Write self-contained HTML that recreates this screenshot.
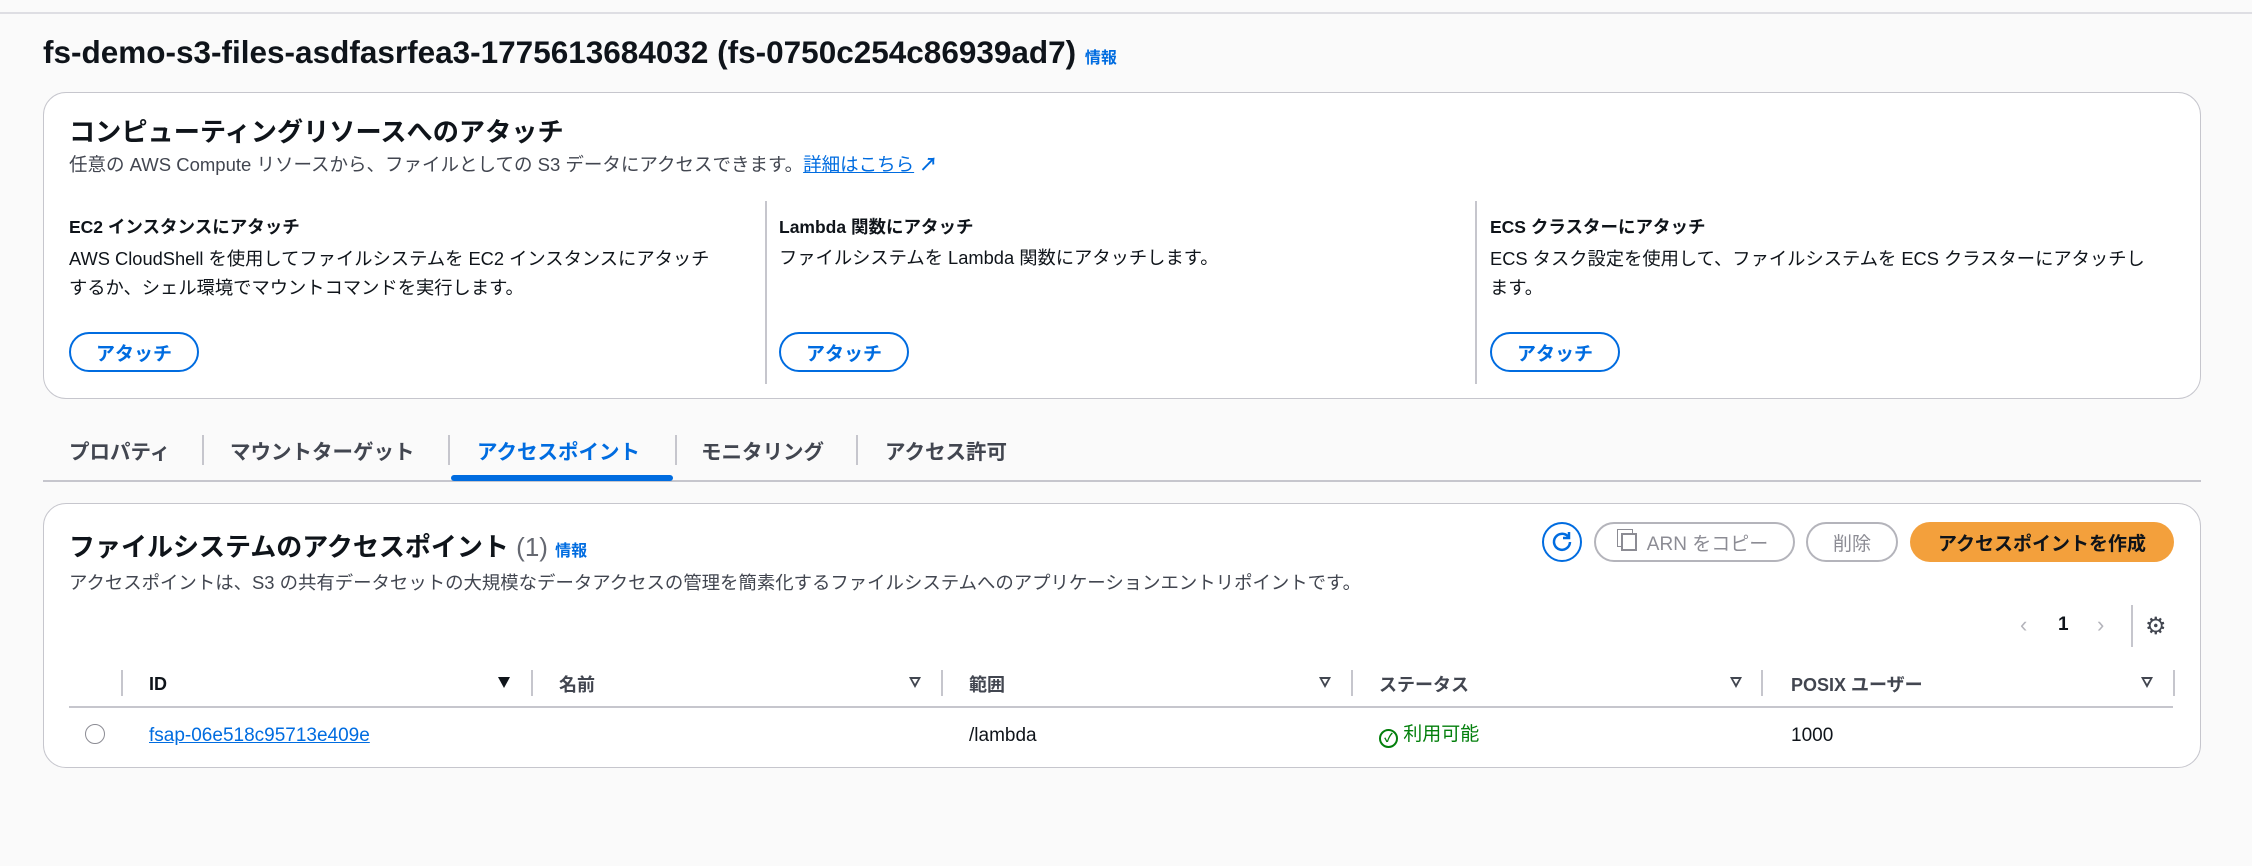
<!DOCTYPE html>
<html><head><meta charset="utf-8"><style>
*{box-sizing:border-box;margin:0;padding:0}
body{width:2252px;height:866px;background:#fafafa;font-family:"Liberation Sans","Noto Sans CJK JP",sans-serif;color:#0f141a;position:relative;overflow:hidden;font-size:19px}
.a{position:absolute;white-space:nowrap}
.card{position:absolute;background:#fff;border:1.5px solid #c6c6cd;border-radius:23px}
.b{font-weight:700}
.link{color:#006ce0}
.btn{position:absolute;height:40px;border:2px solid #006ce0;border-radius:20px;color:#006ce0;font-weight:700;display:flex;align-items:center;justify-content:center;font-size:19px;background:#fff}
.vd{position:absolute;width:1.5px;background:#c6c6cd}
.gray{color:#424650}
.tri{position:absolute;width:0;height:0;border-left:6px solid transparent;border-right:6px solid transparent;border-top:11px solid #424650}
.tri.o::after{content:"";position:absolute;left:-3px;top:-9px;border-left:3px solid transparent;border-right:3px solid transparent;border-top:5px solid #fff}
</style></head><body>
<div class="a" style="left:0;top:12px;width:2252px;height:2px;background:#dedee3"></div>
<div class="a b" style="left:43px;top:34px;font-size:31.5px">fs-demo-s3-files-asdfasrfea3-1775613684032 (fs-0750c254c86939ad7) <span class="link" style="font-size:16px">情報</span></div>

<div class="card" style="left:43px;top:92px;width:2158px;height:307px"></div>
<div class="a b" style="left:69px;top:111px;font-size:26.2px">コンピューティングリソースへのアタッチ</div>
<div class="a gray" style="left:69px;top:151px;font-size:18.5px">任意の AWS Compute リソースから、ファイルとしての S3 データにアクセスできます。<span class="link" style="text-decoration:underline">詳細はこちら</span> <span class="link b">↗</span></div>
<div class="vd" style="left:765px;top:201px;height:183px"></div>
<div class="vd" style="left:1475px;top:201px;height:183px"></div>
<div class="a b" style="left:69px;top:214px;font-size:17.5px">EC2 インスタンスにアタッチ</div>
<div class="a" style="left:69px;top:244px;font-size:18.3px;line-height:29px">AWS CloudShell を使用してファイルシステムを EC2 インスタンスにアタッチ<br>するか、シェル環境でマウントコマンドを実行します。</div>
<div class="btn" style="left:69px;top:332px;width:130px">アタッチ</div>
<div class="a b" style="left:779px;top:214px;font-size:17.5px">Lambda 関数にアタッチ</div>
<div class="a" style="left:779px;top:244px;font-size:18.3px">ファイルシステムを Lambda 関数にアタッチします。</div>
<div class="btn" style="left:779px;top:332px;width:130px">アタッチ</div>
<div class="a b" style="left:1490px;top:214px;font-size:17.5px">ECS クラスターにアタッチ</div>
<div class="a" style="left:1490px;top:244px;font-size:18.3px;line-height:29px">ECS タスク設定を使用して、ファイルシステムを ECS クラスターにアタッチし<br>ます。</div>
<div class="btn" style="left:1490px;top:332px;width:130px">アタッチ</div>

<div class="a b gray" style="left:69px;top:435px;font-size:20.5px">プロパティ</div>
<div class="a b gray" style="left:230px;top:435px;font-size:20.5px">マウントターゲット</div>
<div class="a b link" style="left:477px;top:435px;font-size:20.5px">アクセスポイント</div>
<div class="a b gray" style="left:701px;top:435px;font-size:20.5px">モニタリング</div>
<div class="a b gray" style="left:885px;top:435px;font-size:20.5px">アクセス許可</div>
<div class="vd" style="left:202px;top:435px;height:30px"></div>
<div class="vd" style="left:448px;top:435px;height:30px"></div>
<div class="vd" style="left:675px;top:435px;height:30px"></div>
<div class="vd" style="left:856px;top:435px;height:30px"></div>
<div class="a" style="left:43px;top:480px;width:2158px;height:2px;background:#c6c6cd"></div>
<div class="a" style="left:451px;top:475px;width:222px;height:6px;border-radius:3px;background:#006ce0"></div>

<div class="card" style="left:43px;top:503px;width:2158px;height:265px"></div>
<div class="a b" style="left:69px;top:527px;font-size:26px">ファイルシステムのアクセスポイント <span style="font-weight:400;color:#656871">(1)</span> <span class="link" style="font-size:16px">情報</span></div>
<div class="a gray" style="left:69px;top:569px;font-size:18.4px">アクセスポイントは、S3 の共有データセットの大規模なデータアクセスの管理を簡素化するファイルシステムへのアプリケーションエントリポイントです。</div>

<div class="a" style="left:1542px;top:522px;width:40px;height:40px;border:2px solid #006ce0;border-radius:50%;background:#fff"><svg width="36" height="36" viewBox="0 0 36 36" style="position:absolute;left:0;top:0"><path d="M24 12.5A8 8 0 1 0 26 18" fill="none" stroke="#006ce0" stroke-width="2.5"/><path d="M25 8v6h-6" fill="none" stroke="#006ce0" stroke-width="2.5"/></svg></div>
<div class="btn" style="left:1594px;top:522px;width:201px;border-color:#b4b4bb;color:#8c8c94;font-weight:400"><span style="display:inline-block;width:16px;height:18px;border:2px solid #8c8c94;margin-right:10px;box-shadow:-4px -4px 0 -1px #fff,-4px -4px 0 0 #8c8c94"></span>ARN をコピー</div>
<div class="btn" style="left:1806px;top:522px;width:92px;border-color:#b4b4bb;color:#8c8c94;font-weight:400">削除</div>
<div class="btn" style="left:1910px;top:522px;width:264px;border:none;background:#f3a03c;color:#0f141a">アクセスポイントを作成</div>

<div class="a" style="left:2020px;top:612px;font-size:22px;color:#b4b4bb">‹</div>
<div class="a b" style="left:2058px;top:614px;font-size:19px">1</div>
<div class="a" style="left:2097px;top:612px;font-size:22px;color:#b4b4bb">›</div>
<div class="vd" style="left:2131px;top:605px;height:42px"></div>
<div class="a" style="left:2145px;top:612px;font-size:24px;color:#424650">⚙</div>

<div class="vd" style="left:121px;top:670px;height:26px"></div>
<div class="a b" style="left:149px;top:674px;font-size:18px">ID</div>
<div class="a b" style="left:559px;top:671px;font-size:18px;color:#424650">名前</div>
<div class="a b" style="left:969px;top:671px;font-size:18px;color:#424650">範囲</div>
<div class="a b" style="left:1379px;top:671px;font-size:18px;color:#424650">ステータス</div>
<div class="a b" style="left:1791px;top:671px;font-size:18px;color:#424650">POSIX ユーザー</div>
<div class="tri" style="left:498px;top:677px;border-top-color:#0f141a"></div>
<div class="tri o" style="left:909px;top:677px"></div>
<div class="tri o" style="left:1319px;top:677px"></div>
<div class="tri o" style="left:1730px;top:677px"></div>
<div class="tri o" style="left:2141px;top:677px"></div>
<div class="vd" style="left:531px;top:670px;height:26px"></div>
<div class="vd" style="left:941px;top:670px;height:26px"></div>
<div class="vd" style="left:1351px;top:670px;height:26px"></div>
<div class="vd" style="left:1761px;top:670px;height:26px"></div>
<div class="vd" style="left:2173px;top:670px;height:26px"></div>
<div class="a" style="left:69px;top:706px;width:2104px;height:2px;background:#c6c6cd"></div>

<div class="a" style="left:85px;top:724px;width:20px;height:20px;border:1.5px solid #8c8c94;border-radius:50%"></div>
<div class="a link" style="left:149px;top:725px;font-size:19px;text-decoration:underline">fsap-06e518c95713e409e</div>
<div class="a" style="left:969px;top:725px;font-size:19px">/lambda</div>
<div class="a" style="left:1379px;top:719px;font-size:19px;color:#037f0c"><span style="display:inline-block;width:19px;height:19px;border:2px solid #037f0c;border-radius:50%;font-size:12px;line-height:15px;text-align:center;vertical-align:-2px;font-weight:700">✓</span> 利用可能</div>
<div class="a" style="left:1791px;top:725px;font-size:19px">1000</div>
</body></html>
